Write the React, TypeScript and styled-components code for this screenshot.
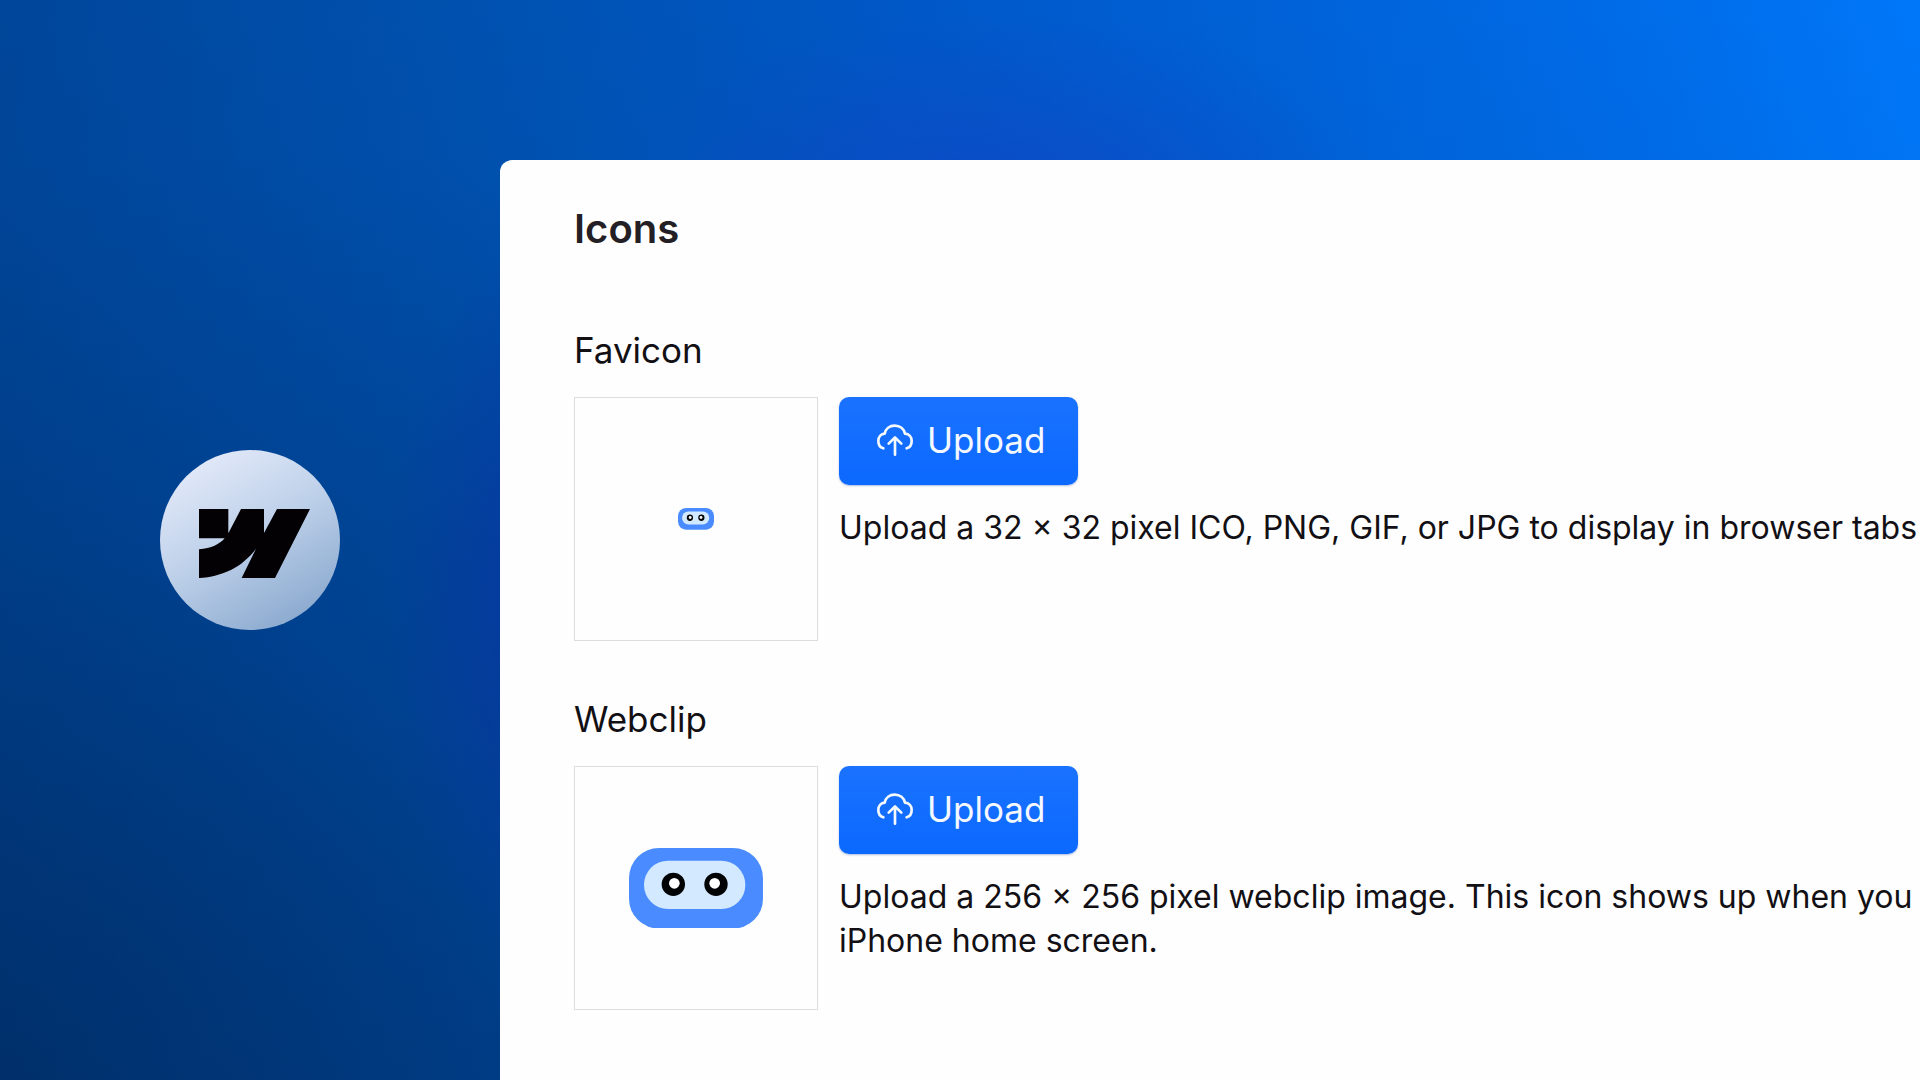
import React from "react";
import styled, { createGlobalStyle } from "styled-components";

const GlobalStyle = createGlobalStyle`
  *, *::before, *::after { box-sizing: border-box; }
  body {
    margin: 0;
    font-family: Inter, "Liberation Sans", sans-serif;
    color: #121014;
  }
`;

const Page = styled.div`
  display: grid;
  grid-template-columns: 500px minmax(0, 1fr);
  min-height: 100vh;
  overflow: hidden;
  background:
    radial-gradient(ellipse 20% 18% at 52% 19%, rgba(16, 70, 198, 0.75) 0%, rgba(16, 70, 198, 0) 100%),
    radial-gradient(ellipse 9% 34% at 29% 56%, rgba(10, 50, 165, 0.7) 0%, rgba(10, 50, 165, 0) 100%),
    radial-gradient(ellipse 30% 50% at 0% 100%, rgba(0, 32, 74, 0.3) 0%, rgba(0, 32, 74, 0) 100%),
    linear-gradient(180deg, rgba(0, 32, 74, 0) 0%, rgba(0, 32, 74, 0.03) 15%, rgba(0, 32, 74, 0.25) 50%, rgba(0, 32, 74, 0.44) 100%),
    linear-gradient(95deg, #00469a 0%, #0052b2 26%, #0058c8 46%, #0062d8 64%, #006dea 83%, #007bff 100%);
`;

const Aside = styled.aside`
  display: flex;
  align-items: center;
  justify-content: center;
`;

const Badge = styled.div`
  display: flex;
  align-items: center;
  justify-content: center;
  width: 180px;
  height: 180px;
  padding: 6px 0 0 8px;
  border-radius: 50%;
  background: linear-gradient(150deg, #e8edfb 5%, #bdd0e9 48%, #7d9fc8 100%);
`;

const Panel = styled.main`
  display: flex;
  flex-direction: column;
  margin-top: 160px;
  padding: 45px 0 64px 74px;
  border-top-left-radius: 12px;
  background: #fefefe;
`;

const Title = styled.h1`
  margin: 0 0 75px;
  font-size: 40px;
  line-height: 48px;
  font-weight: 600;
  color: #231f24;
`;

const Sections = styled.div`
  display: flex;
  flex-direction: column;
  gap: 56px;
`;

const Section = styled.section`
  display: flex;
  flex-direction: column;
  gap: 25px;
`;

const Label = styled.h2`
  margin: 0;
  font-size: 35px;
  line-height: 44px;
  font-weight: 400;
`;

const Row = styled.div`
  display: flex;
  gap: 21px;
`;

const Preview = styled.div`
  flex: none;
  display: flex;
  align-items: center;
  justify-content: center;
  width: 244px;
  height: 244px;
  border: 1px solid #dedcdf;
`;

const Details = styled.div`
  display: flex;
  flex-direction: column;
  align-items: flex-start;
  gap: 21px;
`;

const UploadButton = styled.button`
  display: flex;
  align-items: center;
  gap: 14px;
  height: 88px;
  padding: 0 33px 2px 38px;
  border: 0;
  border-radius: 10px;
  background: linear-gradient(#1a72ff, #0b69ff);
  box-shadow: 0 1px 2px rgba(20, 60, 160, 0.35);
  color: #f4f8ff;
  font: 400 35px/44px Inter, "Liberation Sans", sans-serif;
  cursor: pointer;
`;

const Hint = styled.p`
  margin: 0;
  font-size: 32px;
  line-height: 44px;
  white-space: nowrap;
`;

const WebflowMark = () => (
  <svg width="111" height="69" viewBox="177 237 333 207" role="img" aria-label="Webflow">
    <path
      fill="#030104"
      d="M177 237H265V310L303 237H372V309L411 237H510L405 444H305L348 356C305 413 248 439 177 444V358C214 355 239 343 254 325H177Z"
    />
  </svg>
);

const Robot = ({ width }: { width: number }) => (
  <svg width={width} viewBox="0 0 402 242" aria-hidden="true">
    <rect width="402" height="242" rx="90" fill="#4a8cff" />
    <rect x="45" y="38" width="304" height="145" rx="72" fill="#d2e9ff" />
    <circle cx="133" cy="109" r="35" fill="#020305" />
    <circle cx="261" cy="109" r="35" fill="#020305" />
    <circle cx="136" cy="106" r="16" fill="#fff" />
    <circle cx="257" cy="106" r="16" fill="#fff" />
  </svg>
);

const CloudUpload = () => (
  <svg
    width="36"
    height="32"
    viewBox="169 132 108 96"
    fill="none"
    stroke="currentColor"
    strokeWidth="8"
    strokeLinecap="round"
    strokeLinejoin="round"
    aria-hidden="true"
  >
    <path d="M188 205C177 202 173 193 173 183C173 171 181 162 192 161C195 146 207 137 222 137C238 137 250 147 253 161C265 162 273 171 273 183C273 193 269 202 258 205" />
    <path d="M223 224V173M204 191L223 172L242 191" />
  </svg>
);

type IconFieldProps = { label: string; robotWidth: number; children: React.ReactNode };

const IconField = ({ label, robotWidth, children }: IconFieldProps) => (
  <Section aria-label={label}>
    <Label>{label}</Label>
    <Row>
      <Preview>
        <Robot width={robotWidth} />
      </Preview>
      <Details>
        <UploadButton type="button">
          <CloudUpload />
          Upload
        </UploadButton>
        <Hint>{children}</Hint>
      </Details>
    </Row>
  </Section>
);

export default function App() {
  return (
    <>
      <GlobalStyle />
      <Page>
        <Aside>
          <Badge>
            <WebflowMark />
          </Badge>
        </Aside>
        <Panel>
          <Title>Icons</Title>
          <Sections>
            <IconField label="Favicon" robotWidth={36}>
              Upload a 32 × 32 pixel ICO, PNG, GIF, or JPG to display in browser tabs
            </IconField>
            <IconField label="Webclip" robotWidth={134}>
              Upload a 256 × 256 pixel webclip image. This icon shows up when you
              <br />
              iPhone home screen.
            </IconField>
          </Sections>
        </Panel>
      </Page>
    </>
  );
}
